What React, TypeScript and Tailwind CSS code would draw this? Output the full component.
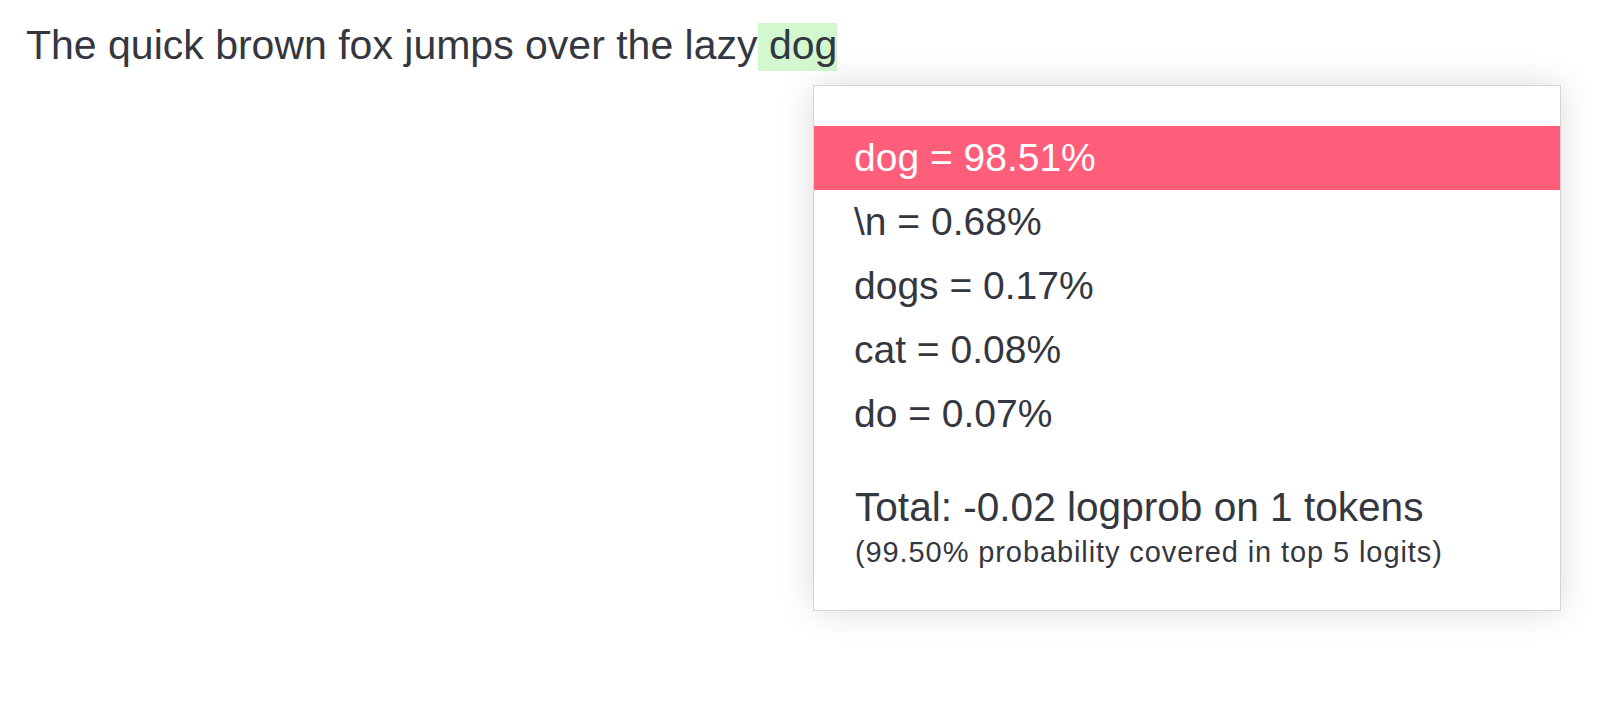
import React from "react";

const rows = [
  { label: "dog = 98.51%", active: true },
  { label: "\\n = 0.68%", active: false },
  { label: "dogs = 0.17%", active: false },
  { label: "cat = 0.08%", active: false },
  { label: "do = 0.07%", active: false },
];

export default function App() {
  return (
    <div
      className="relative w-full h-[702px] bg-white text-[#353740] overflow-hidden"
      style={{ fontFamily: '"Liberation Sans", Arial, sans-serif' }}
    >
      <div className="pl-[26px] pt-[23px] text-[41px] leading-[44px] whitespace-pre">
        The quick brown fox jumps over the lazy
        <span className="inline-block bg-[#d2f8d0] pb-[4px] leading-[44px] whitespace-pre"> dog</span>
      </div>

      <div className="absolute left-[813px] top-[85px] w-[748px] h-[526px] border border-[#d6d6d6] bg-white shadow-[0_0_32px_rgba(0,0,0,0.14)] pt-[40px]">
        {rows.map((r) => (
          <div
            key={r.label}
            className={
              r.active
                ? "h-[64px] flex items-center pl-[40px] text-[39px] bg-[#ff5e7a] text-white"
                : "h-[64px] flex items-center pl-[40px] text-[39px]"
            }
          >
            {r.label}
          </div>
        ))}
        <div className="mt-[37px] pl-[41px] text-[40.6px] leading-[48px]">
          Total: -0.02 logprob on 1 tokens
        </div>
        <div className="mt-[5px] pl-[41px] text-[29px] leading-[32px] tracking-[0.9px]">
          (99.50% probability covered in top 5 logits)
        </div>
      </div>
    </div>
  );
}
